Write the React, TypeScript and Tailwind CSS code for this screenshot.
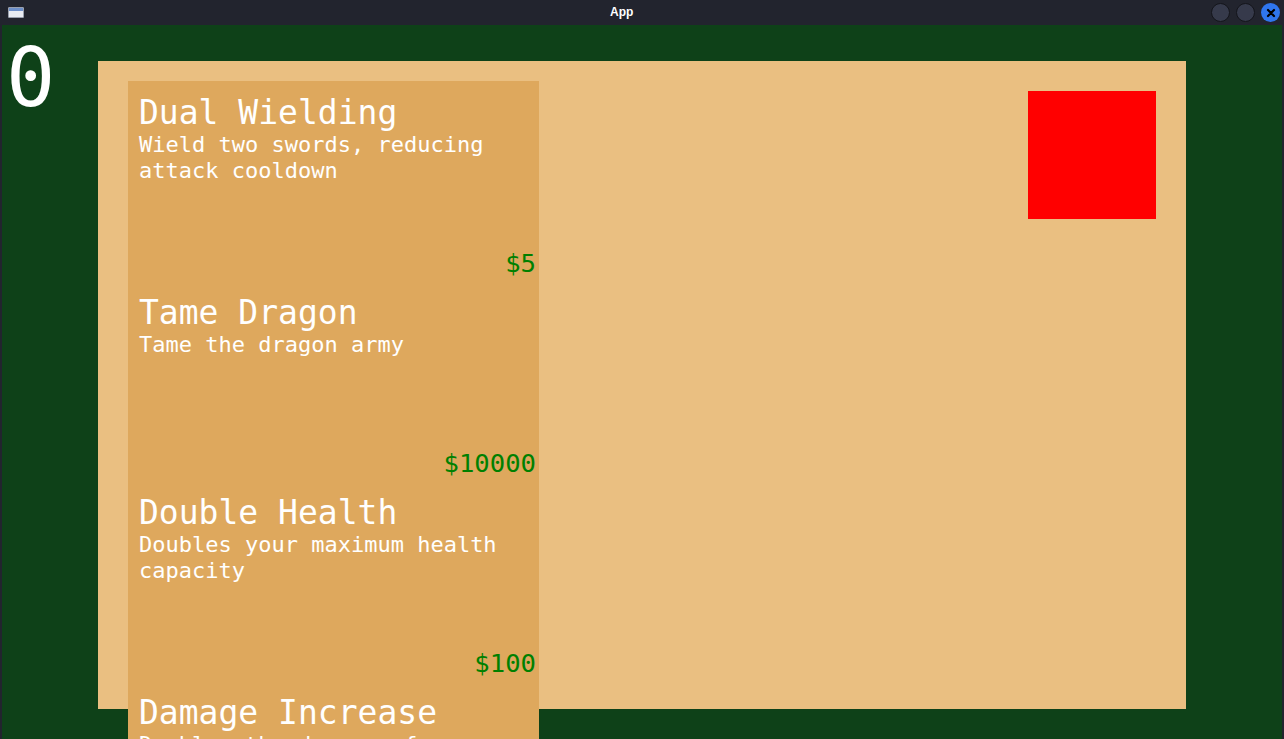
import React from "react";

interface Upgrade {
  name: string;
  description: string;
  price: number;
}

const upgrades: Upgrade[] = [
  { name: "Dual Wielding", description: "Wield two swords, reducing attack cooldown", price: 5 },
  { name: "Tame Dragon", description: "Tame the dragon army", price: 10000 },
  { name: "Double Health", description: "Doubles your maximum health capacity", price: 100 },
  { name: "Damage Increase", description: "Doubles the damage of your sword", price: 250 },
];

function TitleBar() {
  return (
    <div className="relative flex h-[25px] shrink-0 items-center bg-[#22242e] pl-2 pr-[4px]">
      <div className="h-[11px] w-[16px] rounded-[1px] border border-[#9aa0ad] bg-[#e9ecf2]">
        <div className="h-[3px] bg-[#6d8fc9]" />
      </div>
      <div className="absolute left-[610px] top-[3px] font-['Liberation_Sans',sans-serif] text-[12px] font-bold text-white">
        App
      </div>
      <div className="ml-auto flex items-center gap-[6px]">
        <div className="h-[19px] w-[19px] rounded-full border border-[#14151b] bg-[#363a4b]" />
        <div className="h-[19px] w-[19px] rounded-full border border-[#14151b] bg-[#363a4b]" />
        <div className="flex h-[19px] w-[19px] items-center justify-center rounded-full bg-[#2f76ee]">
          <svg width="10" height="10" viewBox="0 0 10 10">
            <path d="M2 2 L8 8 M8 2 L2 8" stroke="#000" strokeWidth="2.2" strokeLinecap="round" />
          </svg>
        </div>
      </div>
    </div>
  );
}

function UpgradeCard({ upgrade }: { upgrade: Upgrade }) {
  return (
    <div className="flex h-[200px] flex-col pl-[11px] pr-[3px] pt-[13px] pb-[3px] text-white">
      <div className="text-[33px] leading-[38px]">{upgrade.name}</div>
      <div className="text-[22px] leading-[25.6px]">{upgrade.description}</div>
      <div className="mt-auto text-right text-[25.6px] leading-[30px] text-[#008000]">
        ${upgrade.price}
      </div>
    </div>
  );
}

export default function App() {
  return (
    <div className="flex h-screen flex-col overflow-hidden bg-[#22242e] font-['DejaVu_Sans_Mono',monospace]">
      <TitleBar />
      <div className="relative mx-[2px] flex-1 bg-[#0e4118]">
        <div className="absolute left-[4px] top-[5px] text-[82px] leading-[96px] text-white">0</div>
        <div className="mx-auto mt-[36px] flex h-[648px] w-[1088px] items-start justify-between bg-[#eabf81]">
          <div className="ml-[30px] mt-[20px] w-[411px] bg-[#dea85d]">
            {upgrades.map((u) => (
              <UpgradeCard key={u.name} upgrade={u} />
            ))}
          </div>
          <div className="mr-[30px] mt-[30px] h-[128px] w-[128px] bg-[#ff0000]" />
        </div>
      </div>
    </div>
  );
}
